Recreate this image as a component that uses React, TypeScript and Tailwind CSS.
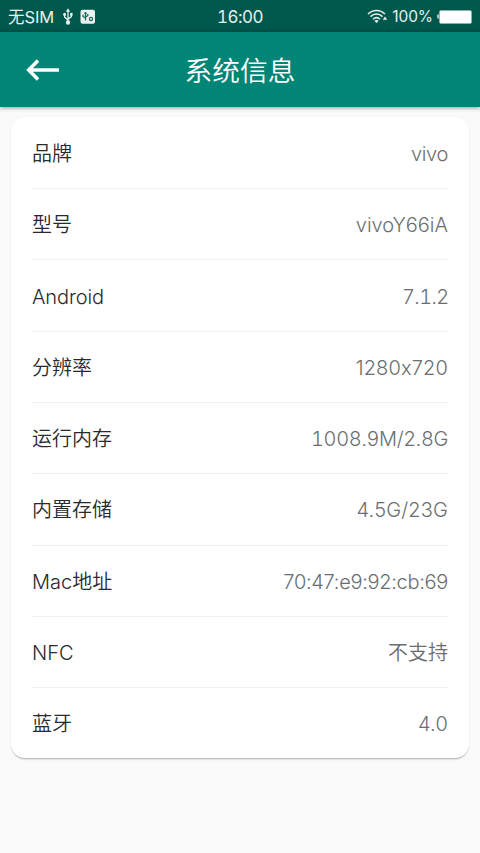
import React from "react";

type Item = { label: string; value: string; labelClass?: string; valueClass?: string };

const items: Item[] = [
  { label: "品牌", value: "vivo", valueClass: "tracking-[-0.35px]" },
  { label: "型号", value: "vivoY66iA" },
  { label: "Android", value: "7.1.2", labelClass: "tracking-[-0.1px]", valueClass: "tabular-nums tracking-[-0.6px] mr-[-0.6px]" },
  { label: "分辨率", value: "1280x720", valueClass: "tracking-[0.15px]" },
  { label: "运行内存", value: "1008.9M/2.8G", valueClass: "tabular-nums tracking-[-0.35px]" },
  { label: "内置存储", value: "4.5G/23G", valueClass: "tracking-[0.15px]" },
  { label: "Mac地址", value: "70:47:e9:92:cb:69", valueClass: "tracking-[-0.3px]" },
  { label: "NFC", value: "不支持" },
  { label: "蓝牙", value: "4.0", valueClass: "tracking-[0.2px]" },
];

function UsbIcon() {
  return (
    <svg width="10" height="17" viewBox="0 0 12 18" preserveAspectRatio="none" fill="none" stroke="#e6f1ef" strokeWidth="1.5">
      <path d="M6 3v12M1.9 6.5v3.2L6 12.6M10.1 6.5v2.6L6 11.8" />
      <path d="M6 .3 8.600 4H3.400z" fill="#e6f1ef" stroke="none" />
      <circle cx="6" cy="15.300" r="2.500" fill="#e6f1ef" stroke="none" />
      <circle cx="1.900" cy="6.800" r="1.700" fill="#e6f1ef" stroke="none" />
      <path d="M8.500 5.200h3v3h-3z" fill="#e6f1ef" stroke="none" />
    </svg>
  );
}

function AssistantIcon() {
  return (
    <svg width="16" height="16" viewBox="0 0 16 16" fill="none">
      <rect x=".5" y=".8" width="14.500" height="14" rx="2" fill="#e9f2f1" />
      <path d="M5.500 3v8.500M3 5.800v1.700l2.500 1.500M7.800 5v1.700L5.500 8M4.300 4.300h2.400" stroke="#1b675c" strokeWidth="1.300" />
      <circle cx="11" cy="10" r="1.600" stroke="#1b675c" strokeWidth="1.200" />
    </svg>
  );
}

function WifiIcon() {
  return (
    <svg width="21" height="15" viewBox="0 0 21 15" fill="none" stroke="#e6f1ef" strokeWidth="1.500">
      <path d="M1 5C5.800.2 13.200.2 18 5M3.500 7.600c3.500-3.400 8.500-3.400 12 0M6 10.200c2.100-1.900 4.900-1.900 7 0" />
      <path d="M7.300 11.800q2.200-1.500 4.400 0L9.500 14z" fill="#e6f1ef" stroke="none" />
      <path d="m18 7.500 2.200 3.300h-4.400z" fill="#e6f1ef" stroke="none" />
    </svg>
  );
}

export default function App() {
  return (
    <div className="flex h-[853px] w-[480px] flex-col overflow-hidden bg-[#fafafa] font-['Inter','Noto_Sans_CJK_SC',sans-serif]">
      <div className="grid h-8 shrink-0 grid-cols-[1fr_auto_1fr] items-center bg-[#00574b] text-[16px] text-[#e6f1ef]">
        <div className="flex items-center pl-2">
          <span className="w-[55px] whitespace-nowrap pt-[1px] text-[16.5px] leading-8 tracking-[-0.1px]">无SIM</span>
          <UsbIcon />
          <span className="ml-[7px]"><AssistantIcon /></span>
        </div>
        <span className="pt-[3px] text-[17px] tabular-nums tracking-[-0.5px]">16:00</span>
        <div className="flex items-center justify-end pr-[8px]">
          <span className="mr-[4px]"><WifiIcon /></span>
          <span className="mr-[4px] pt-[1px] text-[15.5px] tracking-[-0.1px]">100%</span>
          <span className="h-[5px] w-[2px] rounded-l-sm bg-[#a9c7c2]" />
          <span className="h-[14px] w-[33px] rounded-[2px] border border-[#8cafaa] bg-white" />
        </div>
      </div>

      <header className="z-10 grid h-[75px] shrink-0 grid-cols-[60px_1fr_60px] items-center bg-[#008577] text-white shadow-[0_1px_4px_rgba(0,0,0,0.4)]">
        <svg className="ml-[26px]" width="34" height="24" viewBox="0 0 34 24" fill="none" stroke="white" strokeWidth="3.500">
          <path d="M12 2.500 2.700 12 12 21.500M3 12h30" />
        </svg>
        <h1 className="pt-[2px] text-center text-[27.700px] font-[350] leading-10">系统信息</h1>
      </header>

      <main className="mx-[11px] mt-[10px] h-[640.500px] shrink-0 rounded-[14px] bg-white px-[21px] pt-[0.700px] shadow-[0_2px_2px_-1px_rgba(0,0,0,0.32),0_0_1px_rgba(0,0,0,0.08)]">
        {items.map((item) => (
          <div
            key={item.label}
            className="flex h-[71.330px] items-center justify-between border-b-[1.500px] border-[#f2f2f2] pt-[2px] text-[20px] [font-feature-settings:'calt'_0] last:border-transparent"
          >
            <span className={`font-[350] text-[#282a2e] ${item.labelClass ?? ""}`}>{item.label}</span>
            <span className={`font-[350] text-[#6b6e71] ${item.valueClass ?? ""}`}>{item.value}</span>
          </div>
        ))}
      </main>
    </div>
  );
}
